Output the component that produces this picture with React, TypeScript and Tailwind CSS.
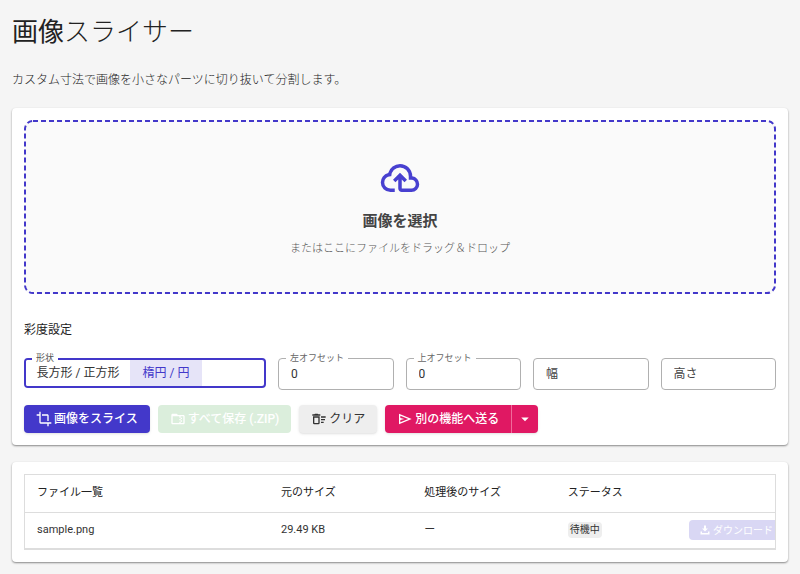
import { useState, type ReactNode } from 'react';

const ICONS = {
  cloudUpload:
    'M6.5 20Q4.22 20 2.61 18.43 1 16.85 1 14.58 1 12.63 2.17 11.1 3.35 9.57 5.25 9.15 5.88 6.85 7.75 5.43 9.63 4 12 4 14.93 4 16.96 6.04 19 8.07 19 11 20.73 11.2 21.86 12.5 23 13.78 23 15.5 23 17.38 21.69 18.69 20.38 20 18.5 20H13Q12.18 20 11.59 19.41 11 18.83 11 18V12.85L9.4 14.4L8 13L12 9L16 13L14.6 14.4L13 12.85V18H18.5Q19.55 18 20.27 17.27 21 16.55 21 15.5 21 14.45 20.27 13.73 19.55 13 18.5 13H17V11Q17 8.93 15.54 7.46 14.08 6 12 6 9.93 6 8.46 7.46 7 8.93 7 11H6.5Q5.05 11 4.03 12.03 3 13.05 3 14.5 3 15.95 4.03 17 5.05 18 6.5 18H9V20Z',
  crop: 'M7,17V1H5V5H1V7H5V17A2,2 0 0,0 7,19H17V23H19V19H23V17M17,15H19V7C19,5.89 18.1,5 17,5H9V7H17V15Z',
  folderZip:
    'M20 6H12L10 4H4C2.9 4 2 4.9 2 6V18C2 19.1 2.9 20 4 20H20C21.1 20 22 19.1 22 18V8C22 6.9 21.1 6 20 6M20 18H16V16H14V18H4V8H14V10H16V8H20V18M16 12V10H18V12H16M14 12H16V14H14V12M18 16H16V14H18V16Z',
  deleteSweep:
    'M15,16H19V18H15V16M15,8H22V10H15V8M15,12H21V14H15V12M11,10V18H5V10H11M13,8H3V18A2,2 0 0,0 5,20H11A2,2 0 0,0 13,18V8M14,5H11L10,4H6L5,5H2V7H14V5Z',
  send: 'M3 20V4L22 12M5 17L16.85 12L5 7V10.5L11 12L5 13.5Z',
  menuDown: 'M7,10L12,15L17,10H7Z',
  download: 'M10 3H14V9H18L12 15L6 9H10V3M3 15H6V18H18V15H21V21H3V15Z',
};

function Icon({ name, className }: { name: keyof typeof ICONS; className: string }) {
  return (
    <svg viewBox="0 0 24 24" fill="currentColor" aria-hidden="true" className={`shrink-0 ${className}`}>
      <path d={ICONS[name]} />
    </svg>
  );
}

function Card({ children }: { children: ReactNode }) {
  return (
    <section className="rounded-sm bg-white p-3 shadow-[0_1px_2px_rgba(0,0,0,0.45)]">{children}</section>
  );
}

interface FieldProps {
  id: string;
  label: string;
  defaultValue?: string;
}

function Field({ id, label, defaultValue }: FieldProps) {
  if (defaultValue === undefined) {
    return (
      <div className="pt-2">
        <input
          id={id}
          type="text"
          aria-label={label}
          placeholder={label}
          className="block h-8 w-full rounded-sm border border-[#b0b0b0] px-3 text-xs leading-6 text-[#333] placeholder:text-[#444]"
        />
      </div>
    );
  }
  return (
    <div className="relative pt-2">
      <label htmlFor={id} className="absolute top-0 left-2 bg-white px-1 text-[9px] leading-4 text-[#666]">
        {label}
      </label>
      <input
        id={id}
        type="text"
        defaultValue={defaultValue}
        className="block h-8 w-full rounded-sm border border-[#b0b0b0] px-3 text-xs leading-6 text-[#333]"
      />
    </div>
  );
}

function App() {
  const [shape, setShape] = useState('ellipse');

  const segment = (value: string) =>
    value === shape ? 'bg-[#e6e4f8] text-[#4338ca]' : 'bg-white text-[#333]';

  return (
    <main className="min-h-screen bg-[#f5f5f5] px-3 pt-3 pb-3 font-[Roboto,'Noto_Sans_CJK_JP',sans-serif] text-[#222]">
      <h1 className="text-[26px] leading-10 font-light">
        <span className="font-normal">画像</span>スライサー
      </h1>
      <p className="mt-4 mb-4 text-xs leading-6 font-light text-[#222]">
        カスタム寸法で画像を小さなパーツに切り抜いて分割します。
      </p>

      <Card>
        <button
          type="button"
          className="relative flex h-[174px] w-full flex-col items-center justify-center rounded-lg bg-[#fafafa] pt-1"
        >
          <svg aria-hidden="true" className="absolute inset-0 h-full w-full overflow-visible p-px">
            <rect width="100%" height="100%" rx="8" fill="none" stroke="#4338ca" strokeWidth="2" strokeDasharray="5 3" />
          </svg>
          <Icon name="cloudUpload" className="size-[42px] text-[#4840d0]" />
          <span className="mt-2 text-[15px] leading-7 font-bold text-[#444]">画像を選択</span>
          <span className="mt-0.5 text-[11px] leading-6 font-light text-[#555]">
            またはここにファイルをドラッグ＆ドロップ
          </span>
        </button>

        <h2 className="mt-6 text-xs leading-6">彩度設定</h2>

        <div className="mt-2 grid grid-cols-[242px_repeat(4,minmax(0,1fr))] gap-3">
          <fieldset className="relative pt-2">
            <legend className="absolute top-0 left-2 bg-white px-1 text-[9px] leading-4 text-[#555]">形状</legend>
            <div className="flex h-[30px] overflow-hidden rounded-sm border-2 border-[#4338ca] text-xs">
              <button type="button" onClick={() => setShape('rect')} className={`w-26 ${segment('rect')}`}>
                長方形 / 正方形
              </button>
              <button type="button" onClick={() => setShape('ellipse')} className={`w-18 ${segment('ellipse')}`}>
                楕円 / 円
              </button>
            </div>
          </fieldset>
          <Field id="left" label="左オフセット" defaultValue="0" />
          <Field id="top" label="上オフセット" defaultValue="0" />
          <Field id="width" label="幅" />
          <Field id="height" label="高さ" />
        </div>

        <div className="mt-[15px] flex h-7 gap-2 text-xs font-medium">
          <button type="button" className="flex items-center gap-0.5 rounded-sm bg-[#4338ca] px-3 text-white shadow">
            <Icon name="crop" className="size-4" />
            画像をスライス
          </button>
          <button type="button" disabled className="flex items-center gap-0.5 rounded-sm bg-[#dbeedc] px-3 text-white">
            <Icon name="folderZip" className="size-4" />
            すべて保存 (.ZIP)
          </button>
          <button type="button" className="flex items-center gap-0.5 rounded-sm bg-[#eee] px-3 font-normal text-[#333] shadow">
            <Icon name="deleteSweep" className="size-4" />
            クリア
          </button>
          <div className="flex rounded-sm bg-[#e01863] text-white shadow">
            <button type="button" className="flex items-center gap-0.5 px-3">
              <Icon name="send" className="size-4" />
              別の機能へ送る
            </button>
            <button type="button" aria-label="その他" className="border-l border-[#f06a9a] px-1">
              <Icon name="menuDown" className="size-[18px]" />
            </button>
          </div>
        </div>
      </Card>

      <div className="mt-[17px]">
        <Card>
          <div className="overflow-hidden border border-b-2 border-[#ddd]">
            <table className="w-full table-fixed text-left text-[11px]">
              <thead>
                <tr className="h-[37px] border-b border-[#ddd]">
                  <th className="w-[244px] px-3 font-normal">ファイル一覧</th>
                  <th className="px-3 font-normal">元のサイズ</th>
                  <th className="px-3 font-normal">処理後のサイズ</th>
                  <th className="px-3 font-normal">ステータス</th>
                  <th aria-label="操作" className="w-[76px]" />
                </tr>
              </thead>
              <tbody>
                <tr className="h-9 text-[#333]">
                  <td className="px-3">sample.png</td>
                  <td className="px-3">29.49 KB</td>
                  <td className="px-3">ー</td>
                  <td className="px-3">
                    <span className="inline-block rounded-sm bg-[#eee] px-0.5 text-[10px] leading-4">待機中</span>
                  </td>
                  <td>
                    <button
                      type="button"
                      disabled
                      className="-ml-2.5 flex h-5 items-center gap-0.5 rounded-sm bg-[#d9d7f4] px-2.5 text-[10px] whitespace-nowrap text-white"
                    >
                      <Icon name="download" className="size-3" />
                      ダウンロード
                    </button>
                  </td>
                </tr>
              </tbody>
            </table>
          </div>
        </Card>
      </div>
    </main>
  );
}

export default App;
